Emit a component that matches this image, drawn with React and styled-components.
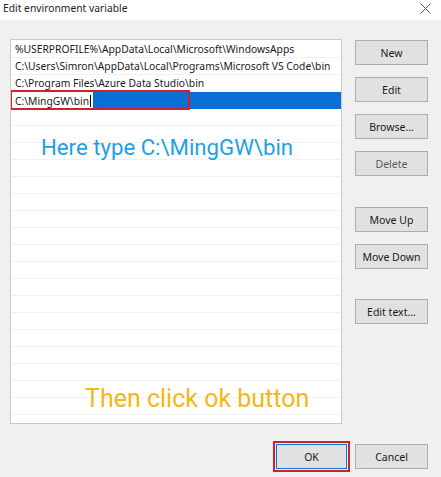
import React from 'react';
import styled, { createGlobalStyle } from 'styled-components';

const GlobalStyle = createGlobalStyle`
  html, body {
    margin: 0;
    padding: 0;
    background: #f0f0f0;
  }
`;

const Dialog = styled.div`
  width: 441px;
  height: 477px;
  background: #f0f0f0;
  display: flex;
  flex-direction: column;
  font-family: 'Noto Sans', 'Open Sans', Arial, sans-serif;
  font-size: 10.3px;
  color: #1a1a1a;
  overflow: hidden;
`;

const TitleBar = styled.div`
  height: 20px;
  background: #fff;
  display: flex;
  align-items: center;
  justify-content: space-between;
  padding: 0 10px 4px 3px;
  box-sizing: border-box;
  font-size: 10.3px;
  color: #222;
`;

const CloseIcon = styled.svg`
  width: 11px;
  height: 11px;
  stroke: #555;
  stroke-width: 1;
`;

const Body = styled.div`
  flex: 1;
  display: grid;
  grid-template-columns: 332px 73px;
  column-gap: 13px;
  padding: 19px 0 0 10px;
`;

const ListBox = styled.div`
  position: relative;
  height: 385px;
  background: #fff;
  border: 1px solid #c9c9c9;
  box-sizing: border-box;
  padding-top: 1px;
  overflow: hidden;
`;

const Row = styled.div`
  height: 17px;
  box-sizing: border-box;
  border-bottom: 1px solid #f1f1f1;
  display: flex;
  align-items: center;
  padding-left: 4px;
  white-space: nowrap;
`;

const SelectedRow = styled.div`
  height: 17px;
  display: flex;
  margin: 0 0 0 1px;
`;

const EditField = styled.div`
  width: 81px;
  background: #fff;
  display: flex;
  align-items: center;
  padding-left: 3px;
  box-sizing: border-box;
`;

const Caret = styled.span`
  display: inline-block;
  width: 1px;
  height: 12px;
  background: #000;
  margin-left: 1px;
`;

const Highlight = styled.div`
  flex: 1;
  background: #0a6fd6;
`;

const Marker = styled.div`
  position: absolute;
  left: -1px;
  top: 50px;
  width: 180px;
  height: 20px;
  border: 2px solid #d11f2c;
  box-sizing: border-box;
`;

const Note = styled.div`
  position: absolute;
  left: ${(p) => p.$left}px;
  top: ${(p) => p.$top}px;
  font-family: Roboto, 'Noto Sans', sans-serif;
  font-size: ${(p) => p.$size}px;
  color: ${(p) => p.$color};
  white-space: nowrap;
`;

const ButtonColumn = styled.div`
  display: flex;
  flex-direction: column;
  padding-top: 1px;
`;

const Button = styled.button`
  width: 73px;
  height: 25px;
  margin-top: ${(p) => p.$gap || 0}px;
  background: #e1e1e1;
  border: 1px solid #adadad;
  font-family: 'Noto Sans', 'Open Sans', Arial, sans-serif;
  font-size: 10.5px;
  color: ${(p) => (p.$dim ? '#5a5a5a' : '#1a1a1a')};
  padding: 0;
  box-sizing: border-box;
`;

const Footer = styled.div`
  display: flex;
  justify-content: flex-end;
  gap: 8px;
  padding: 0 13px 8px 0;
`;

const OkButton = styled(Button)`
  width: 71px;
  border-color: #0078d7;
  outline: 2px solid #d11f2c;
  outline-offset: 1px;
`;

const paths = [
  '%USERPROFILE%\\AppData\\Local\\Microsoft\\WindowsApps',
  'C:\\Users\\Simron\\AppData\\Local\\Programs\\Microsoft VS Code\\bin',
  'C:\\Program Files\\Azure Data Studio\\bin',
];

const App = () => (
  <>
    <GlobalStyle />
    <Dialog>
      <TitleBar>
        <span>Edit environment variable</span>
        <CloseIcon viewBox="0 0 11 11">
          <path d="M0.5 0.5 L10.5 10.5 M10.5 0.5 L0.5 10.5" />
        </CloseIcon>
      </TitleBar>
      <Body>
        <ListBox>
          {paths.map((p) => (
            <Row key={p}>{p}</Row>
          ))}
          <SelectedRow>
            <EditField>
              C:\MingGW\bin
              <Caret />
            </EditField>
            <Highlight />
          </SelectedRow>
          {Array.from({ length: 19 }).map((_, i) => (
            <Row key={i} />
          ))}
          <Marker />
          <Note $left={30} $top={94} $size={22.2} $color="#1f9fe6">
            Here type C:\MingGW\bin
          </Note>
          <Note $left={74} $top={344} $size={25} $color="#f4b716">
            Then click ok button
          </Note>
        </ListBox>
        <ButtonColumn>
          <Button>New</Button>
          <Button $gap={12}>Edit</Button>
          <Button $gap={12}>Browse...</Button>
          <Button $gap={12} $dim>Delete</Button>
          <Button $gap={31}>Move Up</Button>
          <Button $gap={12}>Move Down</Button>
          <Button $gap={30}>Edit text...</Button>
        </ButtonColumn>
      </Body>
      <Footer>
        <OkButton>OK</OkButton>
        <Button>Cancel</Button>
      </Footer>
    </Dialog>
  </>
);

export default App;
